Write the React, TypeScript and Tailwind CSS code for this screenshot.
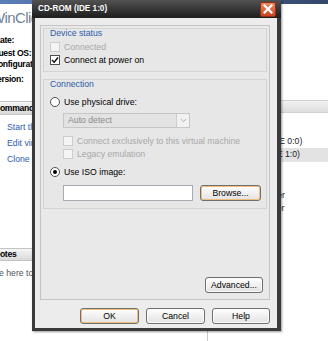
import React from 'react';
import { ChevronDown } from 'lucide-react';

const Box = ({ checked, disabled }: { checked?: boolean; disabled?: boolean }) => (
    <span
        className={
            disabled
                ? 'w-[10px] h-[10px] shrink-0 border border-[#cdcdcd] bg-[#f4f4f4]'
                : 'w-[10px] h-[10px] shrink-0 border border-[#4f4f4f] bg-white flex items-center justify-center'
        }
    >
        {checked && (
            <svg width="8" height="8" viewBox="0 0 8 8">
                <polyline points="1,4 3.2,6.2 7,1.5" fill="none" stroke="#111" strokeWidth="1.5" />
            </svg>
        )}
    </span>
);

const Radio = ({ on }: { on?: boolean }) => (
    <span className="w-[10px] h-[10px] shrink-0 rounded-full border border-[#4f4f4f] bg-white flex items-center justify-center">
        {on && <span className="w-[4px] h-[4px] rounded-full bg-black" />}
    </span>
);

const Btn = ({ label, def, className }: { label: string; def?: boolean; className?: string }) => (
    <button
        className={
            'h-[16px] rounded-[3px] border border-[#6f6f6f] bg-linear-to-b from-white to-[#e2e2e2] text-[8.7px] leading-none text-black flex items-center justify-center ' +
            (def ? 'shadow-[inset_0_0_0_1px_#f0bf7c] ' : 'shadow-[inset_0_0_0_1px_#fafafa] ') +
            (className ?? '')
        }
    >
        {label}
    </button>
);

export default function App() {
    return (
        <div className="relative w-[328px] h-[341px] overflow-hidden bg-white font-['Liberation_Sans',Arial,sans-serif] text-black">
            <div className="h-[4px] bg-linear-to-r from-[#5b7db6] to-[#34486b]" />
            <div className="flex h-[337px]">
                {/* summary pane behind the dialog */}
                <div className="w-[207px] flex flex-col overflow-hidden">
                    <div className="mt-[5px] -ml-[9px] text-[15px] leading-[18px] tracking-[-0.6px] text-[#71839a] whitespace-nowrap">WinClient</div>
                    <div className="-ml-[8px] text-[8.6px] font-bold tracking-[-0.3px] whitespace-nowrap">
                        <div className="mt-[8px] leading-[10px]">State:</div>
                        <div className="mt-[3px] leading-[10px]">Guest OS:</div>
                        <div className="mt-[1px] leading-[10px]">Configuration file:</div>
                        <div className="mt-[5px] leading-[10px]">Version:</div>
                    </div>
                    <div className="mt-[17px] h-[14px] border-y border-[#c4c4c4] bg-linear-to-b from-[#f6f6f6] to-[#d9d9d9] -ml-[6px] text-[8.6px] font-bold tracking-[-0.3px] leading-[12px] whitespace-nowrap">
                        Commands
                    </div>
                    <div className="pl-[7px] text-[8.7px] leading-[10px] text-[#2a5db4] whitespace-nowrap">
                        <div className="mt-[7px]">Start this virtual machine</div>
                        <div className="mt-[6px]">Edit virtual machine settings</div>
                        <div className="mt-[6px]">Clone this virtual machine</div>
                    </div>
                    <div className="mt-[84px] h-[13px] border-y border-[#c4c4c4] bg-linear-to-b from-[#f6f6f6] to-[#d9d9d9] -ml-[6px] text-[8.6px] font-bold tracking-[-0.3px] leading-[11px] whitespace-nowrap">
                        Notes
                    </div>
                    <div className="mt-[7px] -ml-[15px] text-[8.7px] leading-[10px] text-[#555] whitespace-nowrap">
                        Type here to enter notes for this virtual machine.
                    </div>
                </div>
                <div className="flex-1 border-l border-[#c8c8c8] flex flex-col overflow-hidden">
                    <div className="mt-[96px] h-[13px] border-y border-[#d0d0d0] bg-linear-to-b from-[#f2f2f2] to-[#dedede]" />
                    <div className="mt-[8px] text-[8.7px] text-[#222] whitespace-nowrap">
                        {['Memory', 'Hard Disk (IDE 0:0)', 'CD-ROM (IDE 1:0)', 'Floppy', 'Ethernet', 'USB Controller', 'Sound Adapter', 'Processors'].map(d => (
                            <div key={d} className={'h-[13.5px] leading-[13.5px] pl-[19px] ' + (d.startsWith('CD') ? 'bg-[#e3e3e3]' : '')}>
                                {d}
                            </div>
                        ))}
                    </div>
                </div>
            </div>

            {/* CD-ROM dialog */}
            <div className="absolute left-[32px] top-0 w-[249px] h-[331px] bg-[#3a3a3a] flex flex-col shadow-[1px_1px_2px_rgba(0,0,0,0.4)]">
                <div className="h-[18px] shrink-0 bg-linear-to-b from-[#525252] to-[#1d1d1d] flex items-center justify-between pl-[6px] pr-[5px]">
                    <span className="text-white font-bold text-[8.2px] leading-none whitespace-nowrap">CD-ROM (IDE 1:0)</span>
                    <span className="w-[16px] h-[15px] rounded-[2px] border border-[#8f3214] bg-linear-to-b from-[#f08863] to-[#c9411d] flex items-center justify-center">
                        <svg width="10" height="10" viewBox="0 0 10 10">
                            <path d="M1.5 1.5 L8.5 8.5 M8.5 1.5 L1.5 8.5" stroke="white" strokeWidth="2.2" strokeLinecap="square" />
                        </svg>
                    </span>
                </div>
                <div className="flex-1 ml-[3px] mr-[4px] mb-[3px] bg-[#ececec] flex flex-col pl-[5px] pr-[7px]">
                    <div className="mt-[7px] h-[275px] border border-[#c4c4c4] bg-[#e9e9e9] px-[2px] flex flex-col text-[8.7px]">
                        <div className="mt-[2px] h-[44px] border border-[#d3d3d3] bg-[#e7e7e7] pl-[6px] flex flex-col">
                            <div className="h-[9px] leading-[9px] text-[#2c5ba8]">Device status</div>
                            <div className="mt-[4px] h-[10px] flex items-center gap-[4px] text-[#a8a8a8]">
                                <Box disabled /> <span className="leading-none">Connected</span>
                            </div>
                            <div className="mt-[3px] h-[10px] flex items-center gap-[4px]">
                                <Box checked /> <span className="leading-none">Connect at power on</span>
                            </div>
                        </div>
                        <div className="mt-[7px] h-[130px] border border-[#d3d3d3] bg-[#e7e7e7] pl-[6px] flex flex-col">
                            <div className="h-[9px] leading-[9px] text-[#2c5ba8]">Connection</div>
                            <div className="mt-[8px] h-[10px] flex items-center gap-[4px]">
                                <Radio /> <span className="leading-none">Use physical drive:</span>
                            </div>
                            <div className="mt-[6px] ml-[13px] w-[127px] h-[15px] border border-[#c6c6c6] bg-[#e3e3e3] flex items-center">
                                <span className="flex-1 pl-[4px] text-[#8a8a8a] leading-none">Auto detect</span>
                                <span className="w-[13px] h-full border-l border-[#cdcdcd] bg-[#f1f1f1] flex items-center justify-center">
                                    <ChevronDown className="w-[9px] h-[9px] text-[#9a9a9a]" strokeWidth={2} />
                                </span>
                            </div>
                            <div className="mt-[8px] ml-[13px] h-[10px] flex items-center gap-[4px] text-[#a8a8a8]">
                                <Box disabled /> <span className="leading-none whitespace-nowrap">Connect exclusively to this virtual machine</span>
                            </div>
                            <div className="mt-[3px] ml-[13px] h-[10px] flex items-center gap-[4px] text-[#a8a8a8]">
                                <Box disabled /> <span className="leading-none">Legacy emulation</span>
                            </div>
                            <div className="mt-[8px] h-[10px] flex items-center gap-[4px]">
                                <Radio on /> <span className="leading-none">Use ISO image:</span>
                            </div>
                            <div className="mt-[8px] ml-[13px] flex items-center gap-[7px]">
                                <div className="w-[130px] h-[16px] border border-[#a6abb2] bg-white" />
                                <Btn label="Browse..." def className="w-[61px]" />
                            </div>
                        </div>
                        <div className="mt-auto mb-[6px] mr-[4px] self-end">
                            <Btn label="Advanced..." className="w-[58px]" />
                        </div>
                    </div>
                    <div className="mt-[8px] flex justify-end gap-[7px]">
                        <Btn label="OK" def className="w-[59px]" />
                        <Btn label="Cancel" className="w-[59px]" />
                        <Btn label="Help" className="w-[58px]" />
                    </div>
                </div>
            </div>
        </div>
    );
}
